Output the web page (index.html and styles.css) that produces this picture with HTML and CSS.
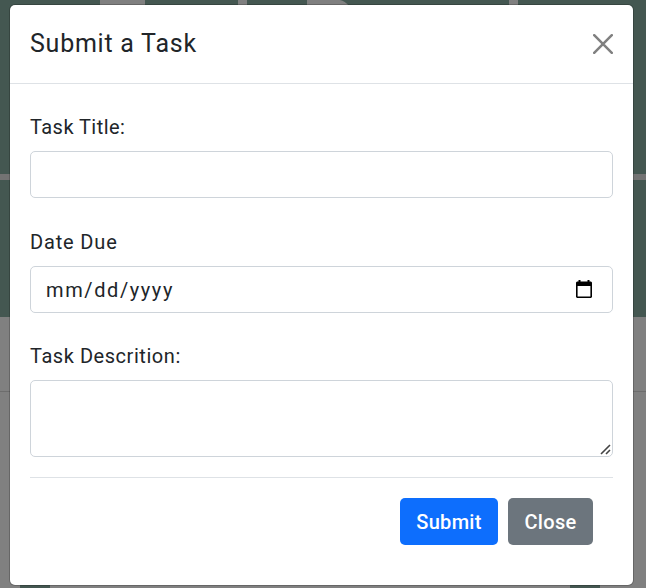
FILE: index.html
```html
<!DOCTYPE html>
<html lang="en">
<head>
<meta charset="utf-8">
<title>Submit a Task</title>
<link rel="stylesheet" href="styles.css">
</head>
<body>
<svg class="backdrop" width="646" height="588" aria-hidden="true">
  <rect width="646" height="588" fill="#808080"/>
  <rect width="646" height="317" fill="#445751"/>
  <path fill="#808080" d="M100 0h45v8h-45zM238 0h9v8h-9zM307 0h33q5 1 9 6H307zM509 0h9v8h-9z"/>
  <rect y="174" width="646" height="6" fill="#737373"/>
  <rect y="391" width="646" height="1" fill="#6d6d6d"/>
  <path fill="#445751" d="M20 580h30v8H20zM570 580h30v8h-30z"/>
</svg>
<main class="modal">
  <header class="modal-header">
    <h1 class="title"><span>Submit a Task</span></h1>
    <button class="dismiss" type="button" aria-label="Close">
      <svg width="20" height="20" viewBox="0 0 20 20"><path d="M1.2 1.2l17.6 17.6M18.8 1.2L1.2 18.8" fill="none" stroke="#808080" stroke-width="2.5" stroke-linecap="round"/></svg>
    </button>
  </header>
  <form class="modal-body">
    <label class="label" for="task-title"><span class="t-title">Task Title:</span></label>
    <input class="control" id="task-title" type="text">
    <div class="label"><span class="t-date">Date Due</span></div>
    <div class="control date">
      <span class="t-value">mm/dd/yyyy</span>
      <svg class="calendar" width="16" height="18" viewBox="0 0 16 18"><path fill="#000" fill-rule="evenodd" d="M2.5 0h2v1.5h7V0h2v1.5H15l1 1V17l-1 1H1l-1-1V2.5l1-1h1.5zM1.6 6v10.4h12.8V6z"/></svg>
    </div>
    <label class="label" for="task-desc"><span class="t-desc">Task Descrition:</span></label>
    <div class="area">
      <textarea class="control" id="task-desc"></textarea>
      <svg class="grip" width="11" height="11" viewBox="0 0 11 11"><path d="M1 10l9-9M6 10l4-4" fill="none" stroke="#444" stroke-width="1.6"/></svg>
    </div>
    <footer class="actions">
      <button class="btn primary" type="button"><span class="t-submit">Submit</span></button>
      <button class="btn secondary" type="button"><span class="t-close">Close</span></button>
    </footer>
  </form>
</main>
</body>
</html>
```
FILE: styles.css
```css
* { box-sizing: border-box; }
body {
  margin: 0;
  height: 588px;
  overflow: hidden;
  padding: 5px 13px 3px 10px;
  font-family: Roboto, "Liberation Sans", sans-serif;
  font-size: 20px;
  line-height: 30px;
  color: #212529;
}
.backdrop { position: absolute; inset: 0; }
.modal {
  position: relative;
  height: 580px;
  background: #fff;
  border-radius: 5px;
  box-shadow: 0 0 0 1px rgba(0, 0, 0, .2);
}
.modal-header {
  height: 79px;
  padding: 0 20px;
  display: flex;
  align-items: center;
  justify-content: space-between;
  border-bottom: 1px solid #dee2e6;
}
.title { margin: 0; font-size: 25px; font-weight: 400; letter-spacing: .75px; }
.dismiss { padding: 0; border: 0; background: none; display: flex; }
.modal-body { padding: 28px 20px 0; }
.label { display: block; height: 30px; margin-bottom: 9px; }
.control {
  display: block;
  width: 100%;
  height: 47px;
  margin: 0 0 29px;
  padding: 0 15px;
  border: 1px solid #ced4da;
  border-radius: 5px;
  background: #fff;
  font: inherit;
}
.date {
  display: flex;
  align-items: center;
  justify-content: space-between;
  padding-right: 20px;
  margin-bottom: 28px;
}
.calendar { margin-bottom: 2px; }
.area { position: relative; }
.area .control { height: 77px; margin: 0; resize: none; }
.grip { position: absolute; right: 2px; bottom: 2px; }
.actions {
  display: flex;
  justify-content: flex-end;
  gap: 10px;
  margin-top: 20px;
  padding: 20px 20px 0;
  border-top: 1px solid #dee2e6;
}
.btn {
  height: 47px;
  padding: 0;
  border: 0;
  border-radius: 5px;
  color: #fff;
  font: inherit;
  font-weight: 500;
}
.primary { width: 98px; background: #0d6efd; }
.secondary { width: 85px; background: #6c757d; }
.t-title { letter-spacing: .45px; }
.t-date { letter-spacing: .85px; }
.t-desc { letter-spacing: .55px; }
.t-value { letter-spacing: 1.6px; }
.t-submit { letter-spacing: .3px; }
.t-close { letter-spacing: .3px; }
```
